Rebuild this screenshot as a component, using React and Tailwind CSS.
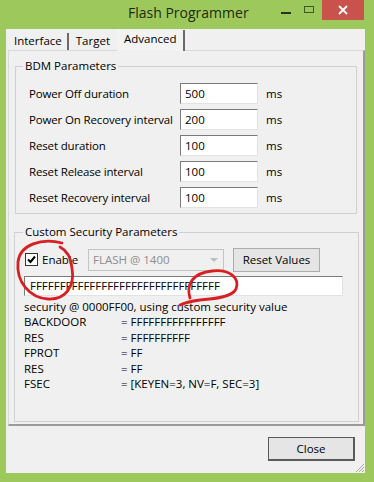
import React from "react";

const font = { fontFamily: '"Open Sans", "Noto Sans", sans-serif' };

function Field({ label, value }) {
  return (
    <div className="flex items-center h-[21px]">
      <div className="w-[164px] pl-[13px] text-[11.5px] tracking-[-0.15px] whitespace-nowrap text-[#000]">{label}</div>
      <div className="w-[78px] h-[21px] bg-white border border-t-[#7a7a7a] border-l-[#7a7a7a] border-r-[#e3e3e3] border-b-[#e3e3e3] flex items-center pl-[4px] text-[11.5px]">
        {value}
      </div>
      <div className="pl-[8px] text-[11.5px]">ms</div>
    </div>
  );
}

export default function App() {
  const rows = [
    ["BACKDOOR", "= FFFFFFFFFFFFFFFF"],
    ["RES", "= FFFFFFFFFF"],
    ["FPROT", "= FF"],
    ["RES", "= FF"],
    ["FSEC", "= [KEYEN=3, NV=F, SEC=3]"],
  ];
  return (
    <div className="relative w-[374px] h-[482px] bg-[#9dc95c] flex flex-col text-black" style={font}>
      {/* title bar */}
      <div className="h-[29px] flex items-start shrink-0">
        <div className="pl-[128px] pt-[3px] text-[14px] text-[#1e2a10] leading-[20px]">Flash Programmer</div>
        <div className="ml-auto flex items-start">
          <div className="w-[10px] h-[2px] bg-[#27331a] mt-[12px] mr-[13px]" />
          <div className="w-[10px] h-[7px] border border-[#3d5a22] mt-[6px] mr-[8px]" />
          <div className="w-[42px] h-[20px] bg-[#c9524c] flex items-center justify-center mr-[10px]">
            <svg width="10" height="10" viewBox="0 0 10 10">
              <path d="M1 1 L9 9 M9 1 L1 9" stroke="#fff" strokeWidth="1.8" />
            </svg>
          </div>
        </div>
      </div>
      {/* client */}
      <div className="ml-[6px] mr-[9px] h-[444px] bg-[#f0f0f0] flex flex-col">
        {/* tabs */}
        <div className="flex items-end h-[21px] pl-[3px] text-[11.5px] leading-[16px]">
          <div className="h-[17px] px-[5px] border-r-2 border-[#6a6a6a] flex items-end pb-[1px]">Interface</div>
          <div className="h-[17px] px-[7px] flex items-end pb-[1px]">Target</div>
          <div className="h-[21px] px-[7px] pt-[1px] border-r-2 border-[#6a6a6a] bg-[#f3f3f3] -mb-[1px] z-10 flex items-start">Advanced</div>
        </div>
        {/* panel */}
        <div className="ml-[2px] w-[357px] h-[376px] border border-[#d9d9d9] border-r-[#9a9a9a] border-b-[#9a9a9a] border-r-2 border-b-2 bg-[#f0f0f0] px-[6px] pt-[7px] flex flex-col">
          <fieldset className="border border-[#d0d0d0] h-[156px] px-0">
            <legend className="ml-[7px] px-[2px] text-[11.5px] leading-[16px]">BDM Parameters</legend>
            <div className="flex flex-col gap-[5px] pt-[9px]">
              <Field label="Power Off duration" value="500" />
              <Field label="Power On Recovery interval" value="200" />
              <Field label="Reset duration" value="100" />
              <Field label="Reset Release interval" value="100" />
              <Field label="Reset Recovery interval" value="100" />
            </div>
          </fieldset>
          <fieldset className="border border-[#d0d0d0] h-[198px] mt-[10px] -ml-[1px] -mr-[2px] px-[9px]">
            <legend className="ml-[-1px] px-[2px] text-[11.5px] leading-[16px]">Custom Security Parameters</legend>
            <div className="flex items-center pt-[7px] h-[32px]">
              <div className="w-[13px] h-[13px] bg-white border border-[#333] flex items-center justify-center ml-[1px]">
                <svg width="9" height="9" viewBox="0 0 9 9">
                  <path d="M1 4.5 L3.5 7 L8 1.5" stroke="#000" strokeWidth="2" fill="none" />
                </svg>
              </div>
              <div className="ml-[4px] text-[11.5px] w-[46px]">Enable</div>
              <div className="w-[136px] h-[22px] border border-[#c4c4c4] bg-[#f0f0f0] flex items-center pl-[4px] text-[11.5px] text-[#8c8c8c]">
                <span className="flex-1">FLASH @ 1400</span>
                <svg width="12" height="8" viewBox="0 0 12 8" className="mr-[3px]">
                  <path d="M2 2 L10 2 L6 6 Z" fill="#bdbdbd" />
                </svg>
              </div>
              <div className="ml-[9px] w-[87px] h-[24px] bg-[#e5e5e5] border border-[#adadad] flex items-center justify-center text-[11.5px]">
                Reset Values
              </div>
            </div>
            <div className="mt-[4px] w-[319px] h-[20px] bg-white border border-t-[#7a7a7a] border-l-[#7a7a7a] border-r-[#e3e3e3] border-b-[#e3e3e3] flex items-center pl-[5px] text-[11.5px]">
              FFFFFFFFFFFFFFFFFFFFFFFFFFFFFFFF
            </div>
            <div className="mt-[3px] text-[11.5px] leading-[15.4px]">
              <div>security @ 0000FF00, using custom security value</div>
              {rows.map(([k, v], i) => (
                <div key={i} className="flex">
                  <div className="w-[97px]">{k}</div>
                  <div>{v}</div>
                </div>
              ))}
            </div>
          </fieldset>
        </div>
        {/* footer */}
        <div className="flex justify-end pt-[11px] pr-[10px]">
          <div className="w-[87px] h-[24px] bg-[#e5e5e5] border border-[#5a5a5a] border-r-2 border-b-2 flex items-center justify-center text-[11.5px]">
            Close
          </div>
        </div>
        <div className="flex-1 flex justify-end items-end">
          <svg width="10" height="10" viewBox="0 0 10 10">
            <path d="M9 1 L1 9 M9 4 L4 9 M9 7 L7 9" stroke="#a8a8a8" strokeWidth="1" />
          </svg>
        </div>
      </div>
      {/* red annotations */}
      <svg className="absolute left-0 top-0 pointer-events-none" width="374" height="482" viewBox="0 0 374 482">
        <path d="M62 243 C42 238, 20 244, 18 262 C16 282, 30 298, 48 299 C66 300, 75 286, 72 268 C71 258, 68 251, 60 247"
          stroke="#d81f22" strokeWidth="2.8" fill="none" strokeLinecap="round" />
        <path d="M190 298 C186 285, 192 273, 212 271 C230 269, 240 278, 236 289 C232 297, 215 299, 200 300 C193 301, 186 302, 180 305"
          stroke="#d81f22" strokeWidth="2.8" fill="none" strokeLinecap="round" />
      </svg>
    </div>
  );
}
